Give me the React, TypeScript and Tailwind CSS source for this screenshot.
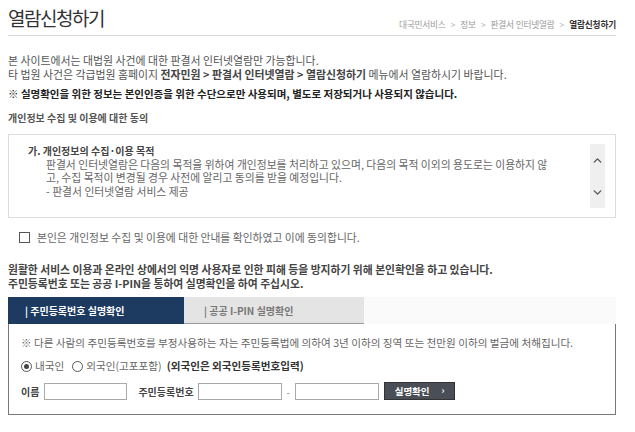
import { ChevronDown, ChevronUp } from "lucide-react";

const font = { fontFamily: '"Noto Sans CJK KR", "Noto Sans", sans-serif' };

function Breadcrumb() {
	const items = ["대국민서비스", "정보", "판결서 인터넷열람"];
	return (
		<div className="flex items-center gap-[5px] text-[8.7px] text-[#9a9a9a] pt-[3px] tracking-[-0.2px]">
			{items.map((t) => (
				<span key={t} className="flex items-center gap-[5px]">
					{t}
					<span className="text-[#b5b5b5]">&gt;</span>
				</span>
			))}
			<span className="font-bold text-[#333]">열람신청하기</span>
		</div>
	);
}

export default function App() {
	return (
		<div className="w-[635px] h-[432px] bg-white overflow-hidden text-[#555]" style={font}>
			<div className="ml-2 w-[608px]">
				<div className="flex items-end justify-between border-b border-[#d9d9d9] pt-[5px] pb-[4px]">
					<h1 className="text-[19px] leading-[26px] text-[#333] tracking-[-1.5px]">열람신청하기</h1>
					<Breadcrumb />
				</div>

				<div className="mt-[18px] text-[10.9px] leading-[13.5px]">
					<p>본 사이트에서는 대법원 사건에 대한 판결서 인터넷열람만 가능합니다.</p>
					<p>
						타 법원 사건은 각급법원 홈페이지 <b className="text-[#444]">전자민원 &gt; 판결서 인터넷열람 &gt; 열람신청하기</b>{" "}
						메뉴에서 열람하시기 바랍니다.
					</p>
				</div>
				<p className="mt-[6px] text-[10.5px] leading-[14px] font-bold text-[#222]">
					※ 실명확인을 위한 정보는 본인인증을 위한 수단으로만 사용되며, 별도로 저장되거나 사용되지 않습니다.
				</p>

				<p className="mt-[10px] text-[10px] leading-[14px] font-bold text-[#555]">개인정보 수집 및 이용에 대한 동의</p>

				<div className="mt-[9px] h-[84px] border border-[#dcdcdc] flex">
					<div className="flex-1 pl-[19px] pt-[9px] text-[10.8px] leading-[13.5px]">
						<p className="font-bold text-[#444] text-[10px]">가. 개인정보의 수집·이용 목적</p>
						<div className="pl-[18px] text-[#666]">
							<p>판결서 인터넷열람은 다음의 목적을 위하여 개인정보를 처리하고 있으며, 다음의 목적 이외의 용도로는 이용하지 않</p>
							<p>고, 수집 목적이 변경될 경우 사전에 알리고 동의를 받을 예정입니다.</p>
							<p>- 판결서 인터넷열람 서비스 제공</p>
						</div>
					</div>
					<div className="w-[15px] mr-[10px] my-[9px] bg-[#efefef] flex flex-col items-center justify-around text-[#555]">
						<ChevronUp size={13} strokeWidth={2.5} />
						<ChevronDown size={13} strokeWidth={2.5} />
					</div>
				</div>

				<label className="mt-[12px] ml-[11px] flex items-center gap-[7px] text-[10.8px] leading-[14px] text-[#666]">
					<span className="w-[11px] h-[11px] border border-[#555] bg-white" />
					본인은 개인정보 수집 및 이용에 대한 안내를 확인하였고 이에 동의합니다.
				</label>

				<div className="mt-[19px] text-[10.8px] leading-[13.5px] font-semibold text-[#444]">
					<p>원활한 서비스 이용과 온라인 상에서의 익명 사용자로 인한 피해 등을 방지하기 위해 본인확인을 하고 있습니다.</p>
					<p>주민등록번호 또는 공공 I-PIN을 통하여 실명확인을 하여 주십시오.</p>
				</div>

				<div className="mt-[7px] flex h-[27px]">
					<div className="w-[176px] bg-[#1d3b61] text-white text-[10px] font-bold flex items-center pl-[17px]">
						| 주민등록번호 실명확인
					</div>
					<div className="w-[180px] bg-[#e4e4e4] border-b border-[#999] text-[#777] text-[10px] font-bold flex items-center pl-[20px]">
						| 공공 I-PIN 실명확인
					</div>
					<div className="flex-1 bg-[#fafafa]" />
				</div>

				<div className="h-[91px] border border-[#777] border-t-0 pl-[12px] pt-[12px] text-[10.6px] text-[#666]">
					<p className="leading-[14px]">※ 다른 사람의 주민등록번호를 부정사용하는 자는 주민등록법에 의하여 3년 이하의 징역 또는 천만원 이하의 벌금에 처해집니다.</p>
					<div className="mt-[9px] flex items-center gap-[3px] leading-[14px]">
						<span className="w-[11px] h-[11px] rounded-full border border-[#555] flex items-center justify-center">
							<span className="w-[5px] h-[5px] rounded-full bg-[#444]" />
						</span>
						<span>내국인</span>
						<span className="ml-[5px] w-[11px] h-[11px] rounded-full border border-[#555]" />
						<span>외국인(고포포함)</span>
						<b className="ml-[2px] text-[#333]">(외국인은 외국인등록번호입력)</b>
					</div>
					<div className="mt-[9px] flex items-center text-[10px]">
						<span className="font-bold text-[#444]">이름</span>
						<span className="ml-[5px] w-[83px] h-[17px] border border-[#aaa]" />
						<span className="ml-[11px] font-bold text-[#444]">주민등록번호</span>
						<span className="ml-[4px] w-[84px] h-[17px] border border-[#aaa]" />
						<span className="mx-[5px] text-[#888]">-</span>
						<span className="w-[84px] h-[17px] border border-[#aaa]" />
						<button className="ml-[5px] w-[71px] h-[18px] bg-[#4a4f57] border border-[#333] text-white text-[9.5px] font-bold flex items-center justify-center gap-[12px]">
							<span>실명확인</span>
							<span className="text-[9px]">›</span>
						</button>
					</div>
				</div>
			</div>
		</div>
	);
}
